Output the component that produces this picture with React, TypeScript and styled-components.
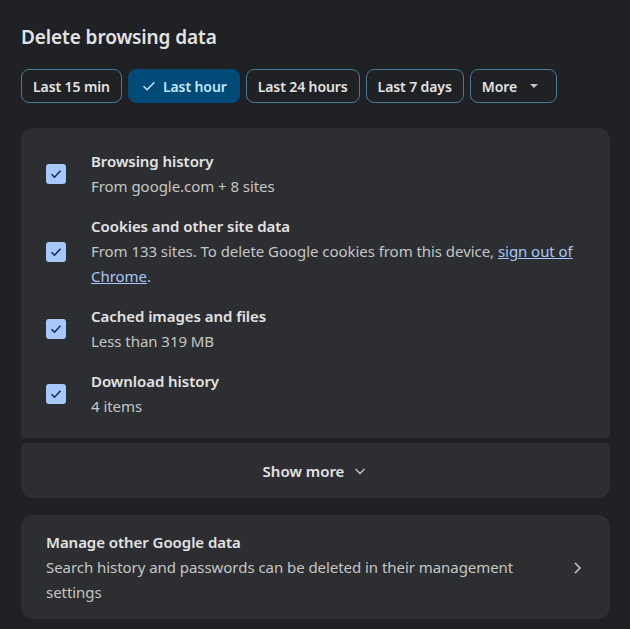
import styled, { createGlobalStyle } from "styled-components";

const Global = createGlobalStyle`
  body { margin: 0; background: #202124; font-family: "Noto Sans", "Open Sans", sans-serif; color: #e3e3e3; }
`;

const Page = styled.div`
  padding: 20px 20px 10px 21px;
  width: 589px;
`;

const Title = styled.h1`
  margin: 0 0 15px;
  font-size: 19px;
  font-weight: 600;
  line-height: 34px;
  letter-spacing: -0.1px;
`;

const Chips = styled.div`
  display: flex;
  gap: 6px;
  margin-bottom: 25px;
`;

const Chip = styled.button<{ $active?: boolean }>`
  display: flex;
  align-items: center;
  gap: 6px;
  height: 34px;
  padding: 0 ${(p) => (p.$active ? "12px" : "11px")};
  border-radius: 8px;
  border: 1px solid ${(p) => (p.$active ? "#004a77" : "#4a7a96")};
  background: ${(p) => (p.$active ? "#004a77" : "transparent")};
  color: ${(p) => (p.$active ? "#c2e7ff" : "#e3e3e3")};
  font-family: inherit;
  font-size: 14px;
  font-weight: 600;
  letter-spacing: -0.1px;
`;

const Card = styled.div<{ $top?: boolean; $bottom?: boolean }>`
  background: #2d2e31;
  border-radius: ${(p) => (p.$top ? "12px 12px 4px 4px" : p.$bottom ? "4px 4px 12px 12px" : "12px")};
`;

const List = styled(Card)`
  padding: 21px 25px 19px;
  display: flex;
  flex-direction: column;
  gap: 15px;
`;

const Row = styled.div`
  display: flex;
  align-items: center;
  gap: 25px;
`;

const Box = styled.span`
  flex: none;
  width: 20px;
  height: 20px;
  border-radius: 3px;
  background: #a8c7fa;
  display: flex;
  align-items: center;
  justify-content: center;
`;

const Text = styled.div`
  font-size: 15px;
  line-height: 25px;
  letter-spacing: -0.05px;
`;

const Strong = styled.div`
  font-weight: 600;
  color: #e3e3e3;
`;

const Sub = styled.div`
  color: #c4c7c5;
  a { color: #a8c7fa; }
`;

const ShowMore = styled(Card)`
  margin-top: 5px;
  height: 55px;
  display: flex;
  align-items: center;
  justify-content: center;
  gap: 8px;
  font-size: 15px;
  font-weight: 600;
`;

const Manage = styled(Card)`
  margin-top: 17px;
  padding: 15px 25px 14px;
  display: flex;
  align-items: center;
  gap: 30px;
`;

const Check = () => (
  <svg width="14" height="14" viewBox="0 0 14 14"><path d="M2.5 7.2l3 3 6-6.4" fill="none" stroke="#062e6f" strokeWidth="1.6" /></svg>
);

const items = [
  ["Browsing history", "From google.com + 8 sites"],
  ["Cookies and other site data", null],
  ["Cached images and files", "Less than 319 MB"],
  ["Download history", "4 items"],
];

export default function App() {
  return (
    <Page>
      <Global />
      <Title>Delete browsing data</Title>
      <Chips>
        <Chip>Last 15 min</Chip>
        <Chip $active>
          <svg width="16" height="16" viewBox="0 0 16 16"><path d="M2.5 8.2l3.6 3.6 7.4-7.6" fill="none" stroke="#c2e7ff" strokeWidth="1.5" /></svg>
          Last hour
        </Chip>
        <Chip>Last 24 hours</Chip>
        <Chip>Last 7 days</Chip>
        <Chip>
          More
          <svg width="22" height="10" viewBox="0 0 22 10"><path d="M7 3h8l-4 4z" fill="#c4c7c5" /></svg>
        </Chip>
      </Chips>
      <List $top>
        {items.map(([t, s]) => (
          <Row key={t}>
            <Box><Check /></Box>
            <Text>
              <Strong>{t}</Strong>
              <Sub>
                {s ?? (
                  <>
                    From 133 sites. To delete Google cookies from this device, <a href="#">sign out of Chrome</a>.
                  </>
                )}
              </Sub>
            </Text>
          </Row>
        ))}
      </List>
      <ShowMore $bottom>
        Show more
        <svg width="16" height="16" viewBox="0 0 16 16"><path d="M3.5 6l4.5 4.5L12.5 6" fill="none" stroke="#c4c7c5" strokeWidth="1.4" /></svg>
      </ShowMore>
      <Manage>
        <Text>
          <Strong>Manage other Google data</Strong>
          <Sub>Search history and passwords can be deleted in their management settings</Sub>
        </Text>
        <svg width="16" height="16" viewBox="0 0 16 16" style={{ flex: "none" }}><path d="M6 3l5 5-5 5" fill="none" stroke="#c4c7c5" strokeWidth="1.5" /></svg>
      </Manage>
    </Page>
  );
}
